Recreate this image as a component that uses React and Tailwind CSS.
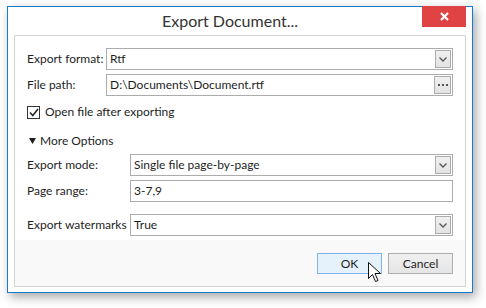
import React from 'react';

const font = { fontFamily: 'Lato, "Noto Sans", sans-serif' };

const DropButton = () => (
  <div className="flex h-[18px] w-[16px] items-center justify-center border border-[#acacac] bg-gradient-to-b from-[#f0f0f0] to-[#e3e3e3]">
    <svg width="8" height="5" viewBox="0 0 8 5">
      <path d="M0.5 0.5 L4 4 L7.5 0.5" fill="none" stroke="#555" strokeWidth="1.3" />
    </svg>
  </div>
);

const DotsButton = () => (
  <div className="flex h-[18px] w-[17px] items-center justify-center gap-[2px] border border-[#acacac] bg-gradient-to-b from-[#f0f0f0] to-[#e3e3e3]">
    <span className="h-[2px] w-[2px] bg-[#555]" />
    <span className="h-[2px] w-[2px] bg-[#555]" />
    <span className="h-[2px] w-[2px] bg-[#555]" />
  </div>
);

const Field = ({ label, labelWidth, value, button }) => (
  <div className="flex h-[22px] items-center">
    <div className={`${labelWidth} shrink-0 text-[12px] text-[#1e1e1e]`}>{label}</div>
    <div className="flex h-[22px] flex-1 items-center justify-between border border-[#acacac] bg-white pl-[3px] pr-[1px]">
      <span className="text-[12px] text-[#1e1e1e]">{value}</span>
      {button === 'drop' && <DropButton />}
      {button === 'dots' && <DotsButton />}
    </div>
  </div>
);

const Cursor = () => (
  <svg className="absolute left-[368px] top-[262px]" width="14" height="22" viewBox="0 0 14 22">
    <path
      d="M0.5 0.5 L0.5 16.5 L4.5 12.5 L7.5 19.5 L10 18.5 L7 11.5 L12.5 11.5 Z"
      fill="#fff"
      stroke="#111"
      strokeWidth="1"
      strokeLinejoin="miter"
    />
  </svg>
);

export default function App() {
  return (
    <div className="relative h-[308px] w-[486px] overflow-hidden bg-white" style={font}>
      <div className="ml-[7px] mt-[6px] h-[287px] w-[466px] border border-[#1979ca] bg-white shadow-[3px_4px_10px_rgba(0,0,0,0.35)]">
        <div className="relative flex h-[28px] items-center justify-center pr-[20px]">
          <span className="text-[16px] text-[#333]">Export Document...</span>
          <div className="absolute right-[6px] top-[-1px] flex h-[21px] w-[44px] items-center justify-center bg-[#e04343]">
            <svg width="9" height="9" viewBox="0 0 9 9">
              <path d="M1 1 L8 8 M8 1 L1 8" stroke="#fff" strokeWidth="2.2" />
            </svg>
          </div>
        </div>

        <div className="mx-[6px] flex h-[252px] flex-col border border-[#d4d4d4]">
          <div className="flex flex-col px-[12px] pt-[12px]">
            <Field label="Export format:" labelWidth="w-[79px]" value="Rtf" button="drop" />
            <div className="mt-[4px]">
              <Field label="File path:" labelWidth="w-[79px]" value="D:\Documents\Document.rtf" button="dots" />
            </div>

            <div className="mt-[6px] flex h-[20px] items-center gap-[5px]">
              <div className="flex h-[13px] w-[13px] items-center justify-center border border-[#333] bg-white">
                <svg width="10" height="9" viewBox="0 0 10 9">
                  <path d="M1 4.5 L3.8 7.5 L9 1" fill="none" stroke="#222" strokeWidth="1.5" />
                </svg>
              </div>
              <span className="text-[12px] text-[#1e1e1e]">Open file after exporting</span>
            </div>

            <div className="mt-[9px] flex h-[20px] items-center gap-[4px] pl-[2px]">
              <svg width="7" height="6" viewBox="0 0 7 6">
                <path d="M0 0 L7 0 L3.5 6 Z" fill="#1e1e1e" />
              </svg>
              <span className="text-[12px] text-[#1e1e1e]">More Options</span>
            </div>

            <div className="mt-[3px]">
              <Field label="Export mode:" labelWidth="w-[103px]" value="Single file page-by-page" button="drop" />
            </div>
            <div className="mt-[4px]">
              <Field label="Page range:" labelWidth="w-[103px]" value="3-7,9" />
            </div>
            <div className="mt-[12px]">
              <Field label="Export watermarks" labelWidth="w-[103px]" value="True" button="drop" />
            </div>
          </div>

          <div className="mt-[4px] flex flex-1 items-start justify-end gap-[6px] bg-[#f9f9f9] pr-[12px] pt-[13px]">
            <div className="flex h-[21px] w-[65px] items-center justify-center border border-[#7eb4ea] bg-[#e5f1fb] text-[12px] text-[#1e1e1e]">
              OK
            </div>
            <div className="flex h-[21px] w-[65px] items-center justify-center border border-[#adadad] bg-gradient-to-b from-[#f0f0f0] to-[#e5e5e5] text-[12px] text-[#1e1e1e]">
              Cancel
            </div>
          </div>
        </div>
      </div>
      <Cursor />
    </div>
  );
}
